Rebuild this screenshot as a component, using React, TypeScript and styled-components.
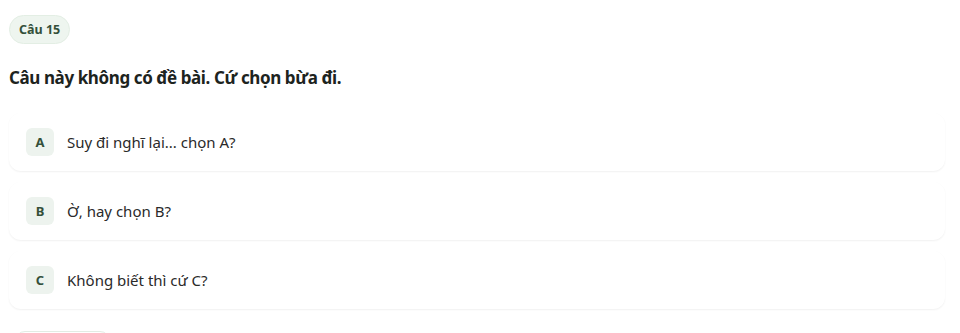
import React from 'react';
import styled, { createGlobalStyle } from 'styled-components';

const GlobalStyle = createGlobalStyle`
  html, body {
    margin: 0;
    padding: 0;
    background: #ffffff;
  }
  body {
    font-family: 'Noto Sans', 'Open Sans', 'Liberation Sans', sans-serif;
    color: #222;
    overflow: hidden;
  }
`;

const Page = styled.div`
  padding: 15px 15px 0 9px;
  display: flex;
  flex-direction: column;
  align-items: flex-start;
`;

const QuestionBadge = styled.div`
  display: inline-flex;
  align-items: center;
  height: 29px;
  padding: 0 9px;
  border-radius: 999px;
  background: #eef5ef;
  border: 1px solid #e3eee4;
  box-sizing: border-box;
  color: #34503a;
  font-size: 12.5px;
  font-weight: 700;
`;

const Title = styled.h2`
  margin: 22px 0 23px;
  font-size: 17px;
  letter-spacing: -0.4px;
  font-weight: 700;
  color: #1d241e;
  line-height: 24px;
`;

const OptionList = styled.ul`
  list-style: none;
  margin: 0;
  padding: 0;
  width: 100%;
  display: flex;
  flex-direction: column;
  gap: 11px;
`;

const OptionCard = styled.li`
  display: flex;
  align-items: center;
  gap: 13px;
  height: 58px;
  padding: 0 17px;
  box-sizing: border-box;
  border-radius: 12px;
  background: #fff;
  box-shadow: 0 1px 2px rgba(0, 0, 0, 0.06);
`;

const Letter = styled.span`
  width: 28px;
  height: 28px;
  flex: none;
  display: flex;
  align-items: center;
  justify-content: center;
  border-radius: 6px;
  background: #edf3ee;
  color: #34503a;
  font-size: 13px;
  font-weight: 700;
`;

const OptionText = styled.span`
  font-size: 15px;
  color: #2a2a2a;
`;

const SubmitButton = styled.button`
  margin: 22px 0 0 6px;
  width: 95px;
  height: 30px;
  border-radius: 10px;
  border: 1px solid #e2ece4;
  background: #fff;
  font-family: inherit;
`;

const options = [
  { key: 'A', text: 'Suy đi nghĩ lại... chọn A?' },
  { key: 'B', text: 'Ờ, hay chọn B?' },
  { key: 'C', text: 'Không biết thì cứ C?' },
];

const App: React.FC = () => {
  return (
    <>
      <GlobalStyle />
      <Page>
        <QuestionBadge>Câu 15</QuestionBadge>
        <Title>Câu này không có đề bài. Cứ chọn bừa đi.</Title>
        <OptionList>
          {options.map((o) => (
            <OptionCard key={o.key}>
              <Letter>{o.key}</Letter>
              <OptionText>{o.text}</OptionText>
            </OptionCard>
          ))}
        </OptionList>
        <SubmitButton />
      </Page>
    </>
  );
};

export default App;
